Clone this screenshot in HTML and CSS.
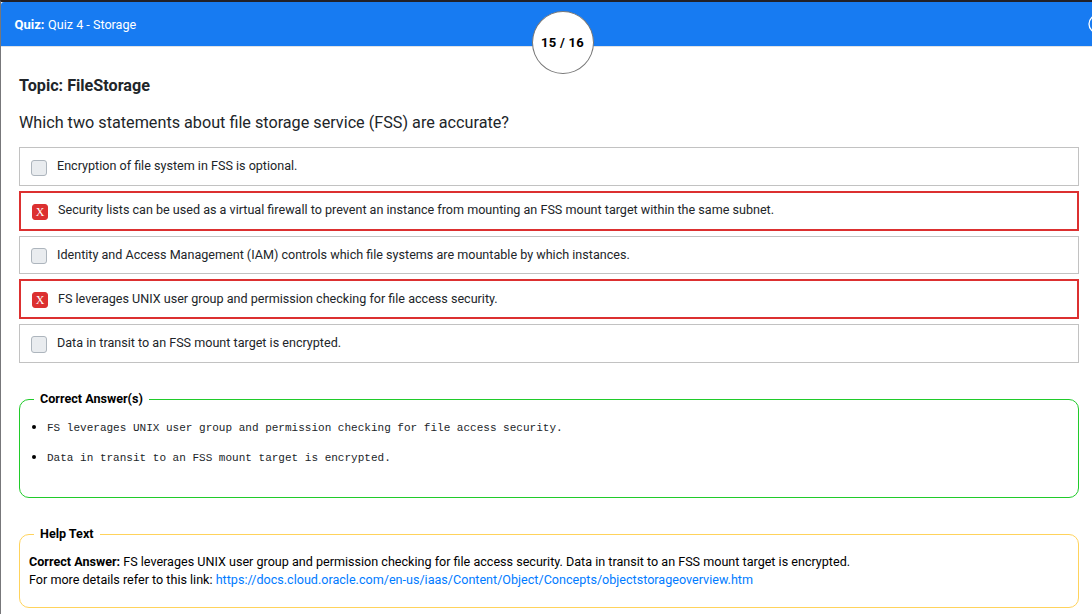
FILE: index.html
```html
<!DOCTYPE html>
<html lang="en">
<head>
<meta charset="utf-8">
<title>Quiz 4 - Storage</title>
<link rel="stylesheet" href="styles.css">
</head>
<body>
<div class="page">
  <header class="bar">
    <div class="bar-title"><b>Quiz:</b> Quiz 4 - Storage</div>
    <div class="counter">15 / 16</div>
    <svg class="bar-icon" width="20" height="20" viewBox="0 0 20 20"><circle cx="10" cy="10" r="9" fill="none" stroke="#fff" stroke-width="1.3"/></svg>
  </header>
  <main class="content">
    <h1 class="topic">Topic: FileStorage</h1>
    <p class="question">Which two statements about file storage service (FSS) are accurate?</p>
    <div class="options">
      <label class="option"><span class="box"></span><span class="text">Encryption of file system in FSS is optional.</span></label>
      <label class="option wrong"><span class="box">X</span><span class="text">Security lists can be used as a virtual firewall to prevent an instance from mounting an FSS mount target within the same subnet.</span></label>
      <label class="option short"><span class="box"></span><span class="text">Identity and Access Management (IAM) controls which file systems are mountable by which instances.</span></label>
      <label class="option wrong lower"><span class="box">X</span><span class="text">FS leverages UNIX user group and permission checking for file access security.</span></label>
      <label class="option last"><span class="box"></span><span class="text">Data in transit to an FSS mount target is encrypted.</span></label>
    </div>
    <fieldset class="panel answers">
      <legend>Correct Answer(s)</legend>
      <ul class="answer-list">
        <li>FS leverages UNIX user group and permission checking for file access security.</li>
        <li>Data in transit to an FSS mount target is encrypted.</li>
      </ul>
    </fieldset>
    <fieldset class="panel help">
      <legend>Help Text</legend>
      <div class="help-text"><b>Correct Answer:</b> FS leverages UNIX user group and permission checking for file access security. Data in transit to an FSS mount target is encrypted.<br>For more details refer to this link: <a class="link" href="#">https://docs.cloud.oracle.com/en-us/iaas/Content/Object/Concepts/objectstorageoverview.htm</a></div>
    </fieldset>
  </main>
</div>
</body>
</html>
```
FILE: styles.css
```css
* { box-sizing: border-box; }
body {
  margin: 0;
  background: #fff;
  color: #212529;
  font: 12.585px/18px Roboto, sans-serif;
  overflow: hidden;
}
.page {
  height: 614px;
  border-top: 2px solid #212028;
  border-left: 1px solid #77777a;
  overflow: hidden;
}
.bar {
  position: relative;
  height: 45px;
  padding: 14px 13.5px 0;
  background: #177bf2;
  border-bottom: 1px solid #dee2e6;
  border-top-left-radius: 3px;
  color: #fff;
}
.bar-title { font-size: 12.6px; }
.bar-title b { font-size: 13px; margin-right: 0.5px; }
.counter {
  position: absolute;
  left: 531px;
  top: 9px;
  width: 62px;
  height: 63px;
  border: 1px solid #777;
  border-radius: 50%;
  background: #fff;
  color: #000;
  font-size: 13px;
  font-weight: 700;
  line-height: 61px;
  text-align: center;
  letter-spacing: 0.3px;
  padding-right: 1px;
}
.bar-icon { position: absolute; left: 1087px; top: 12px; }
.content { padding: 29px 13px 0 18px; }
.topic { margin: 0; font-size: 16.18px; line-height: 20px; font-weight: 700; }
.question { margin: 17px 0 0; font-size: 16.19px; line-height: 20px; }
.options { display: flex; flex-direction: column; gap: 5px; margin-top: 14px; }
.option {
  display: flex;
  height: 39px;
  padding: 0 11px;
  border: 1px solid #c2c2c2;
}
.option.short { height: 38px; }
.option.wrong { height: 40px; border: 2px solid #dc3030; }
.box {
  width: 16px;
  height: 16px;
  margin: 12px 10px 0 0;
  border: 1px solid #adb5bd;
  border-radius: 3px;
  background: #e9ecef;
}
.short .box { margin-top: 11px; }
.last .box { height: 17px; margin-top: 11px; }
.wrong .box {
  margin-top: 11px;
  border-color: #dc3030;
  background: #dc3030;
  color: #fff;
  font: 12px/15px "Liberation Serif", serif;
  text-align: center;
}
.text { margin-top: 9px; }
.wrong .text { margin-top: 8px; }
.lower .text { margin-top: 9px; }
.panel {
  margin: 0;
  padding: 0;
  border: 1px solid #20cb2a;
  border-radius: 10px;
  min-width: 0;
  color: #000;
}
.panel legend { margin-left: 14px; padding: 0 6px; font-weight: 700; line-height: 18px; }
.answers { height: 108px; margin-top: 27px; }
.help { height: 83px; margin-top: 27px; border-color: #ffd35c; }
.answer-list {
  margin: 10px 0 0;
  padding: 0 0 0 27px;
  font: 11.02px/18px "Liberation Mono", monospace;
}
.answer-list li { height: 18px; margin-bottom: 12px; color: #212529; }
.answer-list li::marker { color: #000; font: 14px Roboto, sans-serif; }
.help-text { padding: 10px 9px 0; }
.link { color: #007bff; text-decoration: none; }
```
